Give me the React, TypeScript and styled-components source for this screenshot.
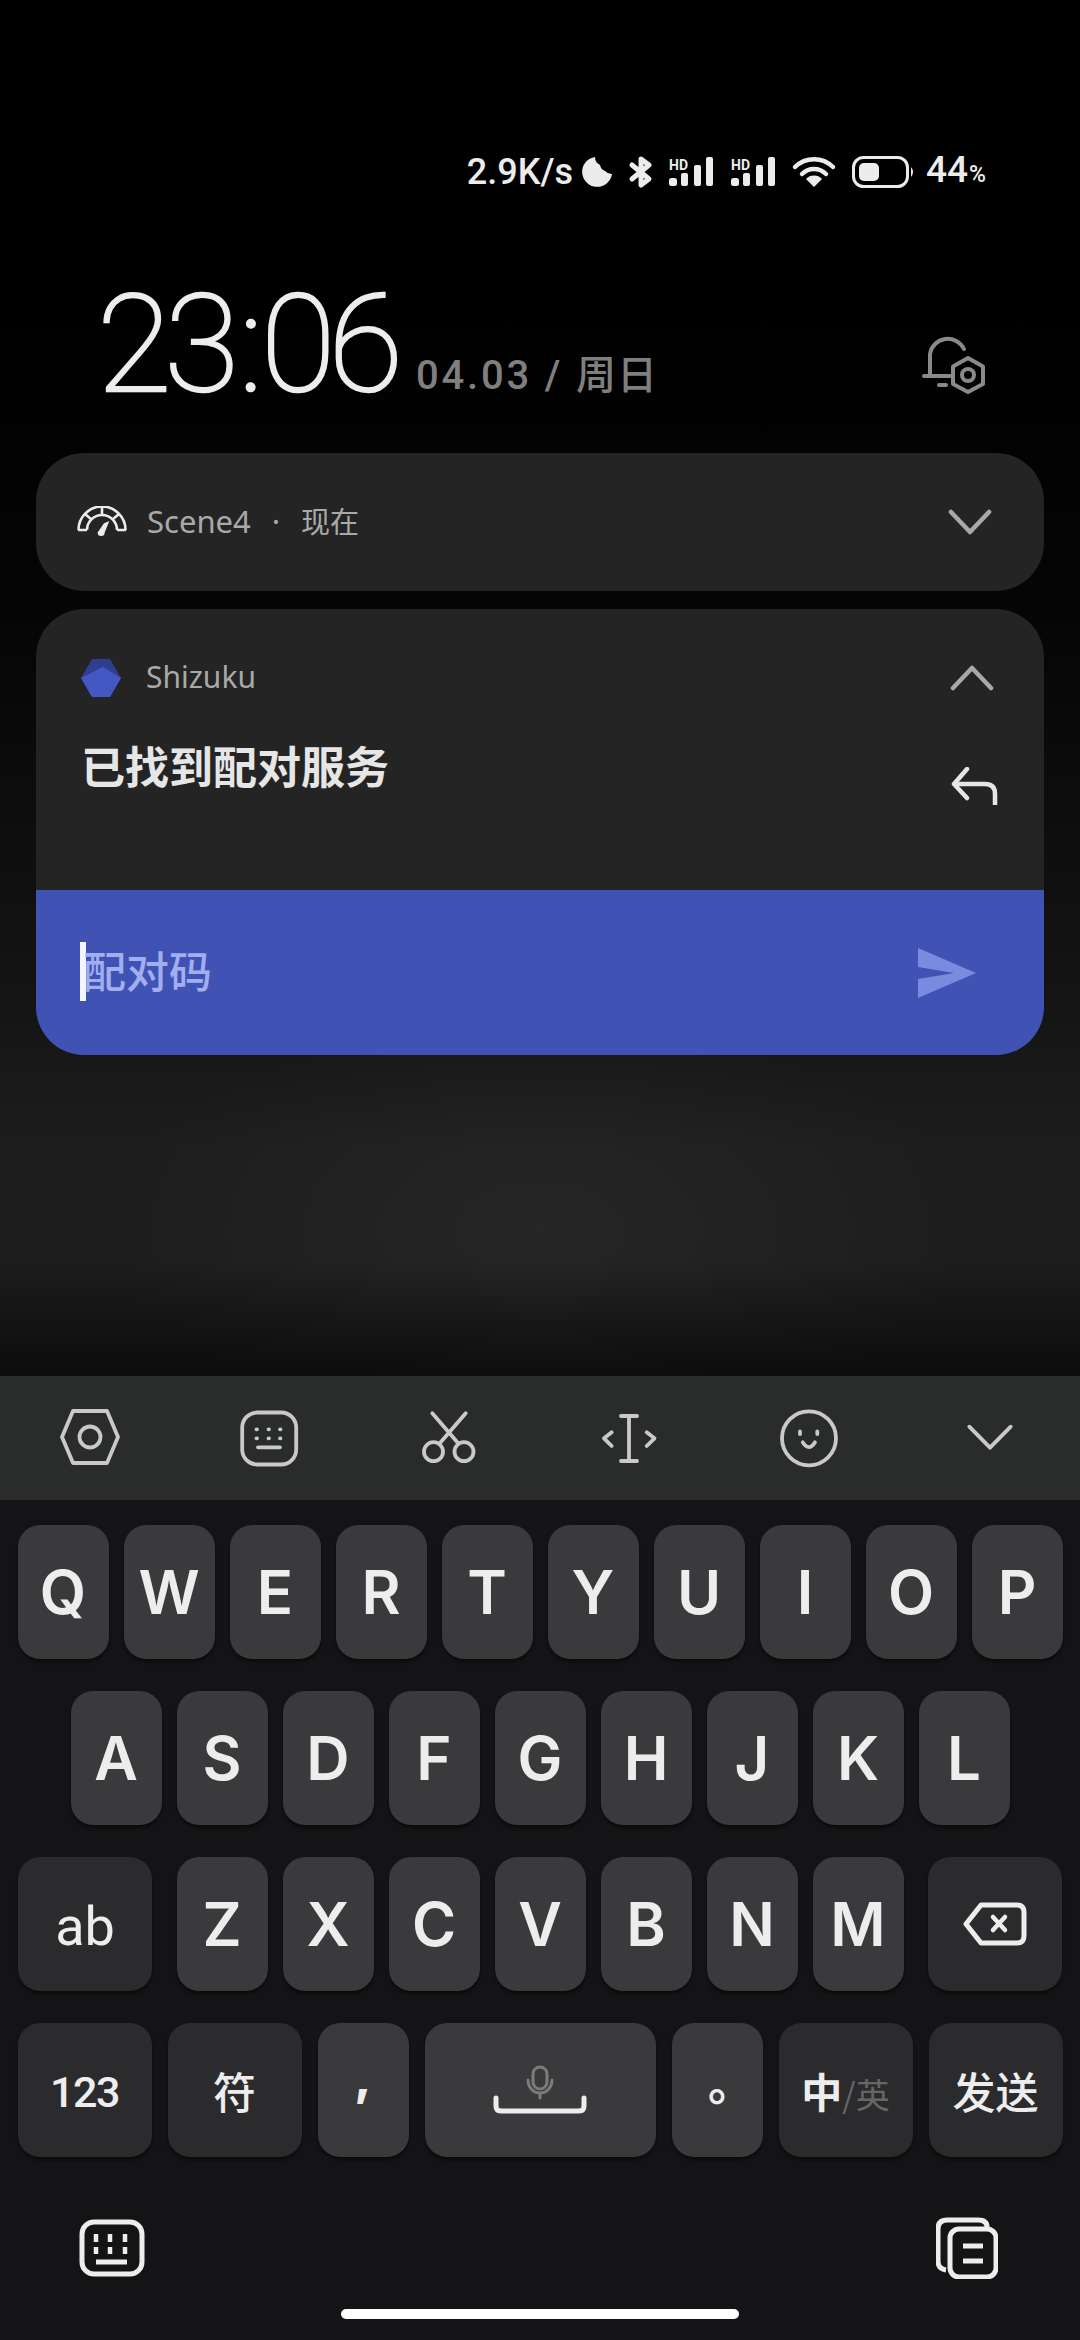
import React from 'react'
import styled, { createGlobalStyle } from 'styled-components'

const GlobalStyle = createGlobalStyle`
  html, body {
    margin: 0;
    padding: 0;
    background: #000;
  }
  * {
    box-sizing: border-box;
  }
`

const cjk = `"Noto Sans CJK SC", sans-serif`

const Screen = styled.div`
  width: 1080px;
  height: 2340px;
  display: flex;
  flex-direction: column;
  overflow: hidden;
  font-family: Roboto, ${cjk};
`

const Shade = styled.div`
  height: 1376px;
  display: flex;
  flex-direction: column;
  background:
    linear-gradient(to bottom, #000 0, #000 300px, rgba(0, 0, 0, 0.82) 620px, rgba(0, 0, 0, 0.3) 1000px, rgba(0, 0, 0, 0) 1150px, rgba(0, 0, 0, 0) 1260px, rgba(0, 0, 0, 0.6) 1376px),
    radial-gradient(ellipse 420px 240px at 540px 1230px, #262626 0, #1d1d1d 100%),
    #1b1b1c;
`

const StatusBar = styled.div`
  display: flex;
  align-items: center;
  justify-content: flex-end;
  height: 32px;
  margin-top: 156px;
  padding-right: 94px;
  color: #ececec;
`

const Speed = styled.span`
  font-size: 36px;
  font-weight: 500;
  line-height: 32px;
  margin-right: 9px;
`

const StatusIcon = styled.svg<{ $gap: number }>`
  display: block;
  overflow: visible;
  margin-right: ${(p) => p.$gap}px;
`

const Percent = styled.span`
  font-size: 37px;
  font-weight: 500;
  line-height: 32px;
  small {
    font-size: 23px;
    font-weight: 500;
    margin-left: 1px;
  }
`

const ClockRow = styled.div`
  display: flex;
  align-items: flex-end;
  height: 122px;
  margin-top: 90px;
  padding: 0 94px 0 97px;
`

const Clock = styled.div`
  font-size: 136px;
  font-weight: 100;
  line-height: 110px;
  letter-spacing: -7px;
  -webkit-text-stroke: 2.6px #ededed;
  color: #ededed;
  height: 110px;
`

const Colon = styled.span`
  margin: 0 5px 0 7px;
`

const DateText = styled.div`
  margin-left: 20px;
  margin-bottom: 2px;
  font-size: 40px;
  font-weight: 500;
  line-height: 44px;
  letter-spacing: 2.8px;
  color: #7f7f7f;
  span {
    letter-spacing: 1px;
  }
`

const BellWrap = styled.div`
  margin-left: auto;
`

const Card = styled.div`
  margin: 0 36px;
  background: #242424;
  border-radius: 48px;
  overflow: hidden;
`

const CollapsedCard = styled(Card)`
  height: 138px;
  margin-top: 53px;
  padding: 0 52px 0 41px;
  display: flex;
  align-items: center;
`

const ExpandedCard = styled(Card)`
  margin-top: 18px;
  height: 446px;
  display: flex;
  flex-direction: column;
`

const CardHead = styled.div`
  display: flex;
  align-items: center;
  padding-right: 4px;
`

const AppName = styled.span`
  margin-left: 20px;
  margin-top: -3px;
  font-family: "Noto Sans", ${cjk};
  font-size: 31px;
  color: #a9a9a9;
  white-space: pre;
`

const ShizukuName = styled(AppName)`
  margin-left: 25px;
  font-size: 30px;
`

const Dot = styled.span`
  margin: 0 21px;
`

const Zh = styled.span`
  font-size: 29px;
`

const Chevron = styled.svg`
  display: block;
  margin-left: auto;
`

const CardBody = styled.div`
  flex: 1;
  padding: 50px 46px 0 45px;
`

const TitleRow = styled.div`
  display: flex;
  align-items: flex-start;
  justify-content: space-between;
  margin-top: 38px;
`

const Title = styled.div`
  font-family: ${cjk};
  font-size: 44px;
  font-weight: 700;
  line-height: 60px;
  color: #e6e6e6;
`

const ReplyBox = styled.div`
  padding-top: 32px;
`

const InputBar = styled.div`
  height: 165px;
  background: #4053b5;
  display: flex;
  align-items: center;
  padding: 0 68px 0 44px;
`

const Caret = styled.span`
  width: 6px;
  height: 59px;
  margin-top: -3px;
  background: #f4f5ff;
`

const Placeholder = styled.span`
  margin-left: -3px;
  margin-top: -7px;
  font-family: ${cjk};
  font-size: 43px;
  font-weight: 500;
  line-height: 60px;
  color: #a2afee;
`

const SendIcon = styled.svg`
  display: block;
  margin-left: auto;
`

const Keyboard = styled.div`
  flex: 1;
  display: flex;
  flex-direction: column;
  background: #141416;
`

const Toolbar = styled.div`
  height: 124px;
  display: grid;
  grid-template-columns: repeat(6, 180px);
  background: #2a2c2c;
`

const ToolCell = styled.div`
  display: flex;
  align-items: center;
  justify-content: center;
`

const ToolIcon = styled.svg`
  display: block;
  width: 60px;
  height: 60px;
  fill: none;
  stroke: #c9c9c9;
  stroke-width: 3.8;
  stroke-linecap: round;
  stroke-linejoin: round;
`

const Keys = styled.div`
  display: flex;
  flex-direction: column;
  gap: 32px;
  padding: 25px 18px 0;
`

const Row = styled.div`
  display: flex;
  justify-content: center;
  gap: 15px;
`

const SplitRow = styled(Row)`
  justify-content: space-between;
  gap: 0;
`

const BottomRow = styled(Row)`
  gap: 16px;
`

const Key = styled.div<{ $w?: number; $fn?: boolean }>`
  width: ${(p) => p.$w ?? 91}px;
  height: 134px;
  flex: none;
  display: flex;
  align-items: center;
  justify-content: center;
  border-radius: 22px;
  background: ${(p) => (p.$fn ? '#2b2b2d' : '#3a3a3d')};
  box-shadow: 0 3px 3px rgba(0, 0, 0, 0.45);
  color: #ededed;
  font-family: Inter, ${cjk};
  font-size: 60px;
  font-weight: 600;
`

const SmallLabel = styled.span`
  font-family: Roboto, sans-serif;
  font-size: 54px;
  font-weight: 400;
  padding-top: 4px;
`

const DigitLabel = styled(SmallLabel)`
  font-size: 43px;
  font-weight: 500;
  letter-spacing: -1.5px;
`

const CjkLabel = styled.span`
  font-family: ${cjk};
  font-size: 43px;
  font-weight: 500;
`

const Comma = styled.span`
  font-family: Inter, sans-serif;
  font-size: 48px;
  font-weight: 800;
  transform: translateY(-14px);
`

const Stop = styled.span`
  font-family: ${cjk};
  font-size: 46px;
  transform: translate(14px, -10px);
`

const Lang = styled.span`
  font-family: ${cjk};
  font-size: 41px;
  font-weight: 700;
  span {
    font-size: 34px;
    font-weight: 400;
    color: #666;
  }
`

const BottomBar = styled.div`
  display: flex;
  align-items: center;
  justify-content: space-between;
  height: 64px;
  margin-top: 59px;
  padding: 0 82px 0 79px;
`

const HomeBar = styled.div`
  width: 398px;
  height: 10px;
  margin: 29px auto 0;
  border-radius: 5px;
  background: #fff;
`

const rowOne = ['Q', 'W', 'E', 'R', 'T', 'Y', 'U', 'I', 'O', 'P']
const rowTwo = ['A', 'S', 'D', 'F', 'G', 'H', 'J', 'K', 'L']
const rowThree = ['Z', 'X', 'C', 'V', 'B', 'N', 'M']

const SignalIcon = () => (
  <StatusIcon $gap={17} width={45} height={30} viewBox='0 0 45 30'>
    <text x='0' y='13' fontFamily='Roboto, sans-serif' fontSize='14' fontWeight='700' fill='#ececec'>
      HD
    </text>
    <rect x='0' y='21' width='8' height='8' rx='2.5' fill='#ececec' />
    <rect x='12' y='16' width='7' height='13' rx='2' fill='#ececec' />
    <rect x='25' y='8' width='7' height='21' rx='2' fill='#ececec' />
    <rect x='37' y='0' width='7' height='29' rx='2' fill='#ececec' />
  </StatusIcon>
)

const App = (): JSX.Element => (
  <Screen>
    <GlobalStyle />
    <Shade>
      <StatusBar>
        <Speed>2.9K/s</Speed>
        <StatusIcon $gap={17} width={30} height={30} viewBox='0 0 30 30'>
          <path
            d='M13 0 A15 15 0 1 0 30 17 A9 9 0 0 1 23 14 A8 8 0 0 1 18 8 A9 9 0 0 1 13 0 Z'
            fill='#ececec'
          />
        </StatusIcon>
        <StatusIcon $gap={16} width={24} height={30} viewBox='0 0 24 30'>
          <path
            d='M3 8 L20 22 L12 28 V2 L20 8 L3 22'
            fill='none'
            stroke='#ececec'
            strokeWidth='5'
            strokeLinejoin='round'
            strokeLinecap='round'
          />
        </StatusIcon>
        <SignalIcon />
        <SignalIcon />
        <StatusIcon $gap={17} width={42} height={30} viewBox='0 0 42 30'>
          <path d='M2 10 A27 27 0 0 1 40 10' fill='none' stroke='#ececec' strokeWidth='4.5' strokeLinecap='round' />
          <path d='M9 17 A17 17 0 0 1 33 17' fill='none' stroke='#ececec' strokeWidth='4.5' strokeLinecap='round' />
          <path d='M21 30 L13 22 A11 11 0 0 1 29 22 Z' fill='#ececec' />
        </StatusIcon>
        <StatusIcon $gap={11} width={63} height={32} viewBox='0 0 63 32'>
          <rect x='1.5' y='1.5' width='54' height='29' rx='10' fill='none' stroke='#ececec' strokeWidth='3' />
          <rect x='7' y='7' width='20' height='18' rx='5' fill='#ececec' />
          <path d='M59 11 Q63 16 59 21 Z' fill='#ececec' />
        </StatusIcon>
        <Percent>
          44<small>%</small>
        </Percent>
      </StatusBar>

      <ClockRow>
        <Clock>
          23<Colon>:</Colon>06
        </Clock>
        <DateText>
          04.03 / <span>周日</span>
        </DateText>
        <BellWrap>
          <svg width={66} height={62} viewBox='18 12 66 62' fill='none' stroke='#8a8a8a' strokeWidth='4' strokeLinecap='round' strokeLinejoin='round'>
            <path d='M28 53 V32 A18 18 0 0 1 62 27' />
            <path d='M22 54 H48' />
            <path d='M37 63 H44' />
            <path d='M66 36 L81 44.5 V62 L66 70 L51 62 V44.5 Z' />
            <circle cx='66' cy='53' r='6' />
          </svg>
        </BellWrap>
      </ClockRow>

      <CollapsedCard>
        <svg width={50} height={32} viewBox='0 0 50 32' fill='none' stroke='#ececec' strokeWidth='2.6'>
          <path d='M1.5 24 A23.5 23.5 0 0 1 48.5 24' />
          <path d='M10 24 A15 15 0 0 1 40 24' />
          <path d='M1 24 H10 M40 24 H49 M8 8 L14 13 M42 8 L36 13 M25 1 V9' />
          <path d='M26 17 L31 14 L28 26 A3.5 3.5 0 0 1 21 27 Z' fill='#ececec' stroke='none' transform='rotate(8 25 24)' />
        </svg>
        <AppName>
          Scene4<Dot>·</Dot>
          <Zh>现在</Zh>
        </AppName>
        <Chevron width={44} height={28} viewBox='0 0 44 28' fill='none' stroke='#a8a8a8' strokeWidth='4.5' strokeLinecap='round' strokeLinejoin='round'>
          <path d='M3 4 L22 24 L41 4' />
        </Chevron>
      </CollapsedCard>

      <ExpandedCard>
        <CardBody>
          <CardHead>
            <svg width={40} height={38} viewBox='0 0 40 38'>
              <path d='M11 0 H29 L40 19 L29 38 H11 L0 19 Z' fill='#2f3e8f' />
              <path d='M0 19 L22 8 L40 19 L29 38 H11 Z' fill='#4358c4' />
            </svg>
            <ShizukuName>Shizuku</ShizukuName>
            <Chevron width={44} height={28} viewBox='0 0 44 28' fill='none' stroke='#a8a8a8' strokeWidth='4.5' strokeLinecap='round' strokeLinejoin='round'>
              <path d='M3 24 L22 4 L41 24' />
            </Chevron>
          </CardHead>
          <TitleRow>
            <Title>已找到配对服务</Title>
            <ReplyBox>
              <svg width={48} height={38} viewBox='0 0 48 38' fill='none' stroke='#e6e6e6' strokeWidth='4.5' strokeLinejoin='round'>
                <path d='M17 2 L4 17 L17 31' strokeLinecap='round' />
                <path d='M4 17 H35 Q45 17 45 27 V38' />
              </svg>
            </ReplyBox>
          </TitleRow>
        </CardBody>
        <InputBar>
          <Caret />
          <Placeholder>配对码</Placeholder>
          <SendIcon width={58} height={50} viewBox='0 0 58 50'>
            <path d='M0 0 L58 25 L0 50 V31 L36 25 L0 19 Z' fill='#7a8ade' />
          </SendIcon>
        </InputBar>
      </ExpandedCard>
    </Shade>

    <Keyboard>
      <Toolbar>
        <ToolCell>
          <ToolIcon viewBox='0 0 60 60'>
            <path d='M13 3 H47 L58 29 L47 55 H13 L2 29 Z' />
            <circle cx='30' cy='29' r='10.5' />
          </ToolIcon>
        </ToolCell>
        <ToolCell>
          <ToolIcon viewBox='0 0 60 60'>
            <rect x='2.2' y='4.5' width='54' height='52' rx='15' />
            <path d='M16.5 21.3 H17 M28.5 21.3 H29 M40 21.3 H40.5 M16.5 30.3 H17 M28.5 30.3 H29 M40 30.3 H40.5 M18 39.3 H40' />
          </ToolIcon>
        </ToolCell>
        <ToolCell>
          <ToolIcon viewBox='0 0 60 60'>
            <path d='M12.3 5.3 L38 35 M45.7 5.3 L20 35' />
            <circle cx='13.5' cy='43.7' r='9.5' />
            <circle cx='44' cy='43.7' r='9.5' />
          </ToolIcon>
        </ToolCell>
        <ToolCell>
          <ToolIcon viewBox='0 0 60 60'>
            <path d='M29 8 V53 M21 8 H37 M21 53 H37' />
            <path d='M11.7 24.3 L4 30.3 L11.7 38 M46.7 24.3 L54.5 30.3 L46.7 38' />
          </ToolIcon>
        </ToolCell>
        <ToolCell>
          <ToolIcon viewBox='0 0 60 60'>
            <circle cx='29' cy='30.3' r='27' />
            <path d='M20 23.5 V26 M37.3 23.5 V26' />
            <path d='M22.7 34.3 Q29 44 35 34.3' />
          </ToolIcon>
        </ToolCell>
        <ToolCell>
          <ToolIcon viewBox='0 0 60 60'>
            <path d='M9.3 18.7 L30 39.7 L50.7 18.7' />
          </ToolIcon>
        </ToolCell>
      </Toolbar>

      <Keys>
        <Row>
          {rowOne.map((letter) => (
            <Key key={letter}>{letter}</Key>
          ))}
        </Row>
        <Row>
          {rowTwo.map((letter) => (
            <Key key={letter}>{letter}</Key>
          ))}
        </Row>
        <SplitRow>
          <Key $w={134} $fn>
            <SmallLabel>ab</SmallLabel>
          </Key>
          <Row>
            {rowThree.map((letter) => (
              <Key key={letter}>{letter}</Key>
            ))}
          </Row>
          <Key $w={134} $fn>
            <svg width={64} height={44} viewBox='0 0 64 44' fill='none' stroke='#ededed' strokeLinejoin='round' strokeLinecap='round'>
              <path d='M18 3 H54 Q61 3 61 10 V34 Q61 41 54 41 H18 L3 22 Z' strokeWidth='5' />
              <path d='M30 15 L42 28 M42 15 L30 28' strokeWidth='4.5' />
            </svg>
          </Key>
        </SplitRow>
        <BottomRow>
          <Key $w={134} $fn>
            <DigitLabel>123</DigitLabel>
          </Key>
          <Key $w={134} $fn>
            <CjkLabel>符</CjkLabel>
          </Key>
          <Key>
            <Comma>,</Comma>
          </Key>
          <Key $w={231}>
            <svg width={96} height={50} viewBox='0 0 96 50' fill='none' strokeLinecap='round'>
              <rect x='41' y='2' width='14' height='22' rx='7' stroke='#7c7c7c' strokeWidth='3' />
              <path d='M36 15 A12 13 0 0 0 60 15 M48 28 V33' stroke='#7c7c7c' strokeWidth='3' />
              <path d='M4 33 V41 Q4 46 9 46 H87 Q92 46 92 41 V33' stroke='#ededed' strokeWidth='5' />
            </svg>
          </Key>
          <Key>
            <Stop>。</Stop>
          </Key>
          <Key $w={134} $fn>
            <Lang>
              中<span>/英</span>
            </Lang>
          </Key>
          <Key $w={134} $fn>
            <CjkLabel>发送</CjkLabel>
          </Key>
        </BottomRow>
      </Keys>

      <BottomBar>
        <svg width={66} height={58} viewBox='0 0 66 58' fill='none' stroke='#ededed' strokeWidth='5'>
          <rect x='3' y='3' width='60' height='52' rx='12' />
          <path d='M17 15 V23 M31 15 V23 M46 15 V23 M17 28 V35 M31 28 V35 M46 28 V35' strokeWidth='4.5' />
          <path d='M17 43 H48' strokeWidth='5' />
        </svg>
        <svg width={62} height={62} viewBox='0 0 62 62' fill='none' stroke='#ededed' strokeWidth='5'>
          <path d='M10 53 Q2 52 2 44 V12 Q2 3 11 3 H42 Q51 3 51 10' />
          <rect x='14' y='12' width='46' height='48' rx='9' fill='#141416' />
          <path d='M27 29 H47 M27 44 H47' />
        </svg>
      </BottomBar>
      <HomeBar />
    </Keyboard>
  </Screen>
)

export default App
